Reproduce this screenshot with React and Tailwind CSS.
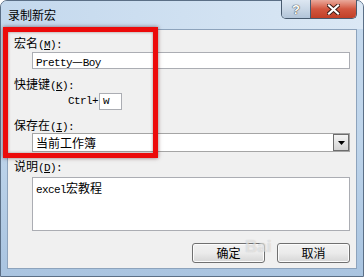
import React from 'react';

const cjk = "font-['Noto_Sans_CJK_SC','Noto_Sans',sans-serif]";
const mono = "font-['Liberation_Mono','Noto_Sans_CJK_SC',monospace]";

// label: CJK part + mnemonic in monospace, like the SimSun look of the dialog
const Label = ({ text, k, className = '' }) => (
  <div className={`h-[15px] leading-[15px] text-black pl-[6px] whitespace-nowrap ${className}`}>
    <span className={`text-[12px] ${cjk}`}>{text}</span>
    <span className={`text-[11px] tracking-[-0.6px] ${mono}`}>(<u className="underline-offset-1">{k}</u>):</span>
  </div>
);

const WinButton = ({ children }) => (
  <button className={`w-[73px] h-[20px] rounded-[3px] border border-[#707070] bg-gradient-to-b from-[#f2f2f2] via-[#ebebeb] to-[#d6d6d6] text-[12px] leading-[18px] text-black shadow-[inset_0_0_0_1px_#fcfcfc] ${cjk}`}>
    {children}
  </button>
);

export default function App() {
  return (
    <div className="w-[364px] h-[277px] bg-white relative overflow-hidden">
      <div className="w-full h-full rounded-t-[7px] border border-[#5b6f86] bg-gradient-to-b from-[#c6daee] via-[#bfd5eb] to-[#a9c4e0] flex flex-col">
        {/* title bar */}
        <div className="h-[28px] flex items-start justify-between pl-[7px] pr-[6px] bg-gradient-to-r from-[#c3d8ed] via-[#cfe0f1] to-[#dbe8f5] rounded-t-[6px]">
          <span className={`mt-[7px] text-[12px] leading-[14px] text-black ${cjk}`}>录制新宏</span>
          <div className="flex h-[19px] -mt-px border border-t-0 border-[#485a6e] rounded-b-[5px] overflow-hidden">
            <div className="w-[29px] flex items-center justify-center bg-gradient-to-b from-[#dde7f2] via-[#c9d7e6] to-[#b2c4d8] border-r border-[#485a6e]">
              <span className="text-[13px] font-bold leading-none text-white [text-shadow:0_0_1px_#333,0_0_1px_#333] font-['Liberation_Sans',sans-serif]">?</span>
            </div>
            <div className="w-[45px] flex items-center justify-center bg-gradient-to-b from-[#e9a99b] via-[#d2563f] to-[#c13f27]">
              <svg width="13" height="11" viewBox="0 0 13 11">
                <path d="M2 1.5 L11 9.5 M11 1.5 L2 9.5" stroke="#3a1a14" strokeWidth="4" strokeLinecap="square" />
                <path d="M2 1.5 L11 9.5 M11 1.5 L2 9.5" stroke="#ffffff" strokeWidth="2.2" strokeLinecap="square" />
              </svg>
            </div>
          </div>
        </div>

        {/* client area */}
        <div className="mx-[6px] mb-[7px] flex-1 border border-[#8da3bc] bg-[#f0f0f0] flex flex-col pt-[5px] pr-[6px] pb-[5px]">
          <Label text="宏名" k="M" />
          <div className="ml-[24px] mt-[2px] h-[17px] border border-[#abadb3] bg-white pl-[3px] leading-[15px] whitespace-nowrap">
            <span className={`text-[11px] tracking-[-0.6px] text-black ${mono}`}>Pretty</span>
            <span className={`text-[12px] text-black ${cjk}`}>—</span>
            <span className={`text-[11px] tracking-[-0.6px] text-black ${mono}`}>Boy</span>
          </div>

          <Label text="快捷键" k="K" className="mt-[7px]" />
          <div className="mt-[2px] h-[17px] flex items-center pl-[60px]">
            <span className={`text-[11px] tracking-[-0.6px] text-black ${mono}`}>Ctrl+</span>
            <div className="ml-[1px] w-[23px] h-[17px] border border-[#abadb3] bg-white flex items-center pl-[3px]">
              <span className={`text-[11px] text-black ${mono}`}>w</span>
            </div>
          </div>

          <Label text="保存在" k="I" className="mt-[7px]" />
          <div className="ml-[24px] mt-[1px] h-[19px] border border-[#a5a5a5] bg-white flex items-center justify-between">
            <span className={`pl-[3px] text-[12px] leading-none text-black ${cjk}`}>当前工作簿</span>
            <div className="w-[16px] h-[17px] border border-[#6d6d6d] bg-gradient-to-b from-[#f4f4f4] to-[#d4d4d4] flex items-center justify-center">
              <svg width="7" height="4" viewBox="0 0 7 4"><path d="M0 0 H7 L3.5 4 Z" fill="#000" /></svg>
            </div>
          </div>

          <Label text="说明" k="D" className="mt-[6px]" />
          <div className="ml-[24px] mt-[4px] h-[54px] border border-[#abadb3] bg-white pl-[3px] pt-[1px] leading-[16px]">
            <span className={`text-[11px] tracking-[-0.6px] text-black ${mono}`}>excel</span>
            <span className={`text-[12px] text-black ${cjk}`}>宏教程</span>
          </div>

          <div className="mt-[12px] flex justify-end gap-[12px]">
            <WinButton>确定</WinButton>
            <WinButton>取消</WinButton>
          </div>
        </div>
      </div>

      {/* red annotation box */}
      <div className="absolute left-[3px] top-[27px] w-[155px] h-[131px] border-[5px] border-[#ec0a0a] shadow-[0_0_4px_rgba(60,0,0,0.55),inset_0_0_3px_rgba(60,0,0,0.45)] pointer-events-none" />

      {/* watermark */}
      <div className="absolute left-[245px] top-[238px] text-[17px] font-bold leading-none text-white/50 [text-shadow:0_0_1px_rgba(120,120,120,0.4)] pointer-events-none font-['Liberation_Sans',sans-serif]">
        Bai
      </div>
    </div>
  );
}
